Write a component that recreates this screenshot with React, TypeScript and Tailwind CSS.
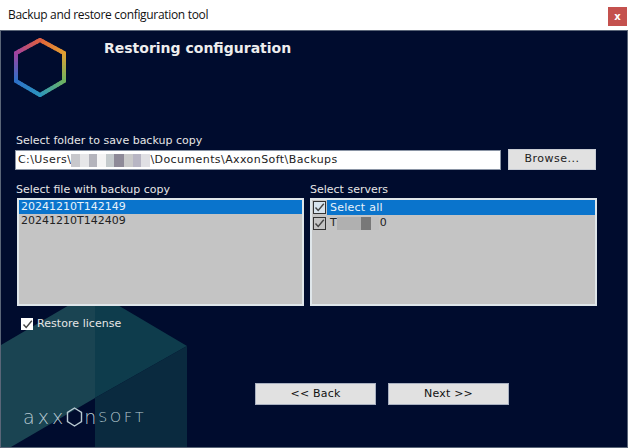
import React from 'react';

const UI_FONT = "font-['DejaVu_Sans','Liberation_Sans',sans-serif]";

function CheckMark({ className }: { className: string }) {
  return (
    <span className={`flex items-center justify-center shrink-0 w-[13px] h-[13px] ${className}`}>
      <svg width="11" height="11" viewBox="0 0 11 11" fill="none">
        <path d="M1.5 5.5 L4.2 8.5 L9.8 1.8" stroke="#444" strokeWidth="1.4" />
      </svg>
    </span>
  );
}

function Smudge({ items }: { items: [number, string][] }) {
  return (
    <span className="inline-flex h-[13px] shrink-0">
      {items.map(([w, c], i) => (
        <span key={i} className="h-full" style={{ width: w, backgroundColor: c }} />
      ))}
    </span>
  );
}

// hexagon corners clockwise from the top, with the colour at each corner
const HEX: [number, number, number[]][] = [
  [26, 2, [226, 98, 58]],
  [50, 15, [226, 160, 50]],
  [50, 43, [110, 178, 96]],
  [26, 57, [44, 150, 190]],
  [2, 43, [46, 112, 200]],
  [2, 15, [160, 66, 160]],
];

function HexLogo() {
  const parts: React.ReactNode[] = [];
  HEX.forEach(([x, y, c], i) => {
    const [nx, ny, nc] = HEX[(i + 1) % HEX.length];
    for (let s = 0; s < 8; s++) {
      const a = s / 8;
      const b = (s + 1) / 8;
      const col = c.map((v, k) => Math.round(v + (nc[k] - v) * a));
      parts.push(
        <line
          key={`${i}-${s}`}
          x1={x + (nx - x) * a}
          y1={y + (ny - y) * a}
          x2={x + (nx - x) * b}
          y2={y + (ny - y) * b}
          stroke={`rgb(${col.join(',')})`}
          strokeWidth="4"
          strokeLinecap="round"
        />,
      );
    }
  });
  return (
    <svg width="52" height="59" viewBox="0 0 52 59" fill="none">
      {parts}
    </svg>
  );
}

function BackgroundHex() {
  return (
    <svg className="absolute left-0 bottom-0" width="187" height="143" viewBox="0 0 187 143">
      <polygon points="0,41 70,0 94,0 94,94 10,143 0,143" fill="#1a4452" />
      <polygon points="94,0 115,0 186,42 94,94" fill="#0e3c4c" />
      <polygon points="94,94 186,42 186,143 94,143" fill="#0a2a3f" />
    </svg>
  );
}

function Wordmark() {
  return (
    <div className="absolute left-[22px] bottom-[20px] flex items-center h-[20px] font-extralight text-[#b8cad2] leading-none">
      <span className="text-[19px] tracking-[3px]">axx</span>
      <svg width="17" height="20" viewBox="0 0 17 20" fill="none">
        <path d="M8.5 1 L15.5 5.5 L15.5 14.5 L8.5 19 L1.5 14.5 L1.5 5.5 Z" stroke="#b8cad2" strokeWidth="1.4" />
      </svg>
      <span className="ml-[1px] text-[19px]">n</span>
      <span className="ml-[2px] text-[14px] tracking-[3px]">SOFT</span>
    </div>
  );
}

function ListBox({ children }: { children: React.ReactNode }) {
  return <div className="w-[287px] h-[108px] bg-[#c4c4c4] border-2 border-[#dfe6ea] overflow-hidden">{children}</div>;
}

function FlatButton({ children, className }: { children: React.ReactNode; className: string }) {
  return (
    <button className={`h-[22px] bg-[#e1e1e1] border border-[#a8b0c0] text-[#111] text-[11px] tracking-[0.2px] ${className}`}>
      {children}
    </button>
  );
}

export default function App() {
  return (
    <div className={`w-[628px] h-[448px] flex flex-col bg-white overflow-hidden ${UI_FONT}`}>
      <div className="h-[30px] flex items-center justify-between pl-2 pr-[1px] shrink-0">
        <span className="font-['Open_Sans',sans-serif] text-[12px] tracking-[-0.32px] text-[#111]">Backup and restore configuration tool</span>
        <span className="w-[19px] h-[19px] mt-[3px] flex items-center justify-center bg-[#c4514e] text-white text-[10px] font-bold">x</span>
      </div>

      <div className="relative flex-1 bg-[#000c2e] border border-[#5a6678] text-[#e6e6e6] text-[11px]">
        <BackgroundHex />
        <Wordmark />

        <div className="relative flex flex-col">
          <div className="flex pl-[13px] pt-[7px] h-[100px]">
            <HexLogo />
            <h1 className="ml-[38px] text-[14px] leading-[20px] font-bold text-[#eeeeee]">Restoring configuration</h1>
          </div>

          <div className="pl-[15px] h-[18px] leading-[20px]">Select folder to save backup copy</div>
          <div className="flex items-end pl-[14px]">
            <div className="w-[486px] h-[20px] flex items-center pl-[2px] bg-white border border-[#8a94a4] text-[#222] tracking-[0.42px]">
              C:\Users\
              <Smudge items={[[9, '#c8c8cc'], [9, '#e6e6e8'], [8, '#b4b4bc'], [9, '#f4f4f4'], [8, '#c4cacc'], [10, '#8e8a98'], [9, '#cacaca'], [8, '#b8b6c4'], [9, '#e0e0e4']]} />
              \Documents\AxxonSoft\Backups
            </div>
            <button className="ml-[7px] w-[88px] h-[21px] bg-[#e1e1e1] border border-[#c8ccd4] text-[#222] tracking-[0.5px]">Browse...</button>
          </div>

          <div className="flex pl-[15px] mt-[10px] h-[18px] leading-[20px]">
            <span className="w-[294px]">Select file with backup copy</span>
            <span>Select servers</span>
          </div>

          <div className="flex pl-[16px] gap-[6px]">
            <ListBox>
              <div className="h-[14px] leading-[14px] pl-[2px] bg-[#0a74cc] text-[#e8f2fa]">20241210T142149</div>
              <div className="h-[14px] leading-[13px] pl-[2px] text-[#222]">20241210T142409</div>
            </ListBox>
            <ListBox>
              <div className="flex items-center h-[15px]">
                <CheckMark className="ml-[1px] bg-[#d8e4ee] border border-[#333]" />
                <span className="ml-[1px] pl-[3px] flex-1 h-full leading-[15px] bg-[#0a74cc] text-[#e8f2fa] tracking-[0.25px]">Select all</span>
              </div>
              <div className="flex items-center h-[13px] mt-[2px] text-[#222]">
                <CheckMark className="ml-[1px] border border-[#333]" />
                <span className="ml-[4px]">T</span>
                <Smudge items={[[24, '#b0b0b0'], [10, '#787878'], [8, '#c0c0c0']]} />
                <span className="ml-[1px]">0</span>
              </div>
            </ListBox>
          </div>

          <label className="flex items-center pl-[20px] mt-[12px] h-[12px]">
            <CheckMark className="!w-[12px] !h-[12px] bg-white" />
            <span className="ml-[4px] tracking-[0.05px]">Restore license</span>
          </label>

          <div className="flex pl-[254px] gap-[12px] mt-[53px]">
            <FlatButton className="w-[121px]">&lt;&lt; Back</FlatButton>
            <FlatButton className="w-[121px]">Next &gt;&gt;</FlatButton>
          </div>
        </div>
      </div>
    </div>
  );
}
